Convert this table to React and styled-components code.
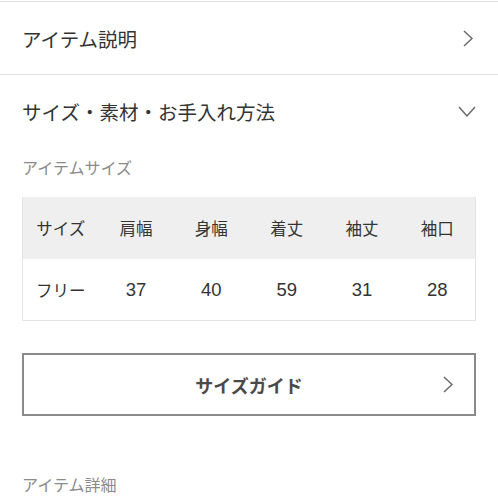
import styled, { createGlobalStyle } from "styled-components";

const GlobalStyle = createGlobalStyle`
  html, body {
    margin: 0;
    padding: 0;
    background: #fff;
  }
  body {
    font-family: "Noto Sans CJK JP", "Noto Sans", sans-serif;
    color: #333;
  }
`;

const Page = styled.div`
  width: 498px;
  padding-top: 1px;
`;

const AccordionRow = styled.div`
  height: 73px;
  border-top: 1px solid #e2e2e2;
  display: flex;
  align-items: center;
  justify-content: space-between;
  padding: 0 22px;
  box-sizing: border-box;
  font-size: 19.5px;
  color: #333;
`;

const IconBox = styled.span`
  display: flex;
  align-items: center;
  justify-content: center;
  width: ${(p) => p.$w}px;
  margin-right: ${(p) => p.$mr || 0}px;
`;

const Section = styled.div`
  padding: 0 22px;
`;

const Label = styled.div`
  font-size: 16px;
  line-height: 24px;
  color: #8a8a8a;
  margin-top: ${(p) => p.$mt}px;
`;

const Table = styled.div`
  margin-top: 18px;
  border: 1px solid #e4e4e4;
  border-top: none;
`;

const Row = styled.div`
  display: grid;
  grid-template-columns: repeat(6, 1fr);
  align-items: center;
  height: ${(p) => p.$h}px;
  background: ${(p) => (p.$head ? "#efefef" : "#fff")};
`;

const Cell = styled.div`
  text-align: center;
  font-family: "Liberation Sans", "Noto Sans CJK JP", sans-serif;
  font-size: ${(p) => (p.$num ? 18.5 : 16.5)}px;
  color: #333;
`;

const GuideButton = styled.div`
  margin-top: 32px;
  height: 63px;
  border: 2px solid #8a8a8a;
  box-sizing: border-box;
  display: grid;
  grid-template-columns: 1fr auto 1fr;
  align-items: center;
`;

const GuideText = styled.span`
  font-size: 18px;
  font-weight: 700;
  color: #4a4a4a;
`;

const ChevronSlot = styled(IconBox)`
  justify-self: end;
  margin-right: 21px;
`;

const ChevronRight = () => (
  <svg width="10" height="17" viewBox="0 0 10 17" fill="none">
    <polyline points="1,1 9,8.5 1,16" stroke="#666" strokeWidth="1.4" />
  </svg>
);

const ChevronDown = () => (
  <svg width="18" height="11" viewBox="0 0 18 11" fill="none">
    <polyline points="1,1 9,10 17,1" stroke="#666" strokeWidth="1.4" />
  </svg>
);

const heads = ["サイズ", "肩幅", "身幅", "着丈", "袖丈", "袖口"];
const values = ["フリー", "37", "40", "59", "31", "28"];

export default function App() {
  return (
    <Page>
      <GlobalStyle />
      <AccordionRow>
        <span>アイテム説明</span>
        <IconBox $w={10} $mr={3}>
          <ChevronRight />
        </IconBox>
      </AccordionRow>
      <AccordionRow>
        <span>サイズ・素材・お手入れ方法</span>
        <IconBox $w={18}>
          <ChevronDown />
        </IconBox>
      </AccordionRow>
      <Section>
        <Label $mt={8}>アイテムサイズ</Label>
        <Table>
          <Row $head $h={62}>
            {heads.map((h) => (
              <Cell key={h}>{h}</Cell>
            ))}
          </Row>
          <Row $h={61}>
            {values.map((v, i) => (
              <Cell key={v} $num={i > 0}>
                {v}
              </Cell>
            ))}
          </Row>
        </Table>
        <GuideButton>
          <span />
          <GuideText>サイズガイド</GuideText>
          <ChevronSlot $w={10}>
            <ChevronRight />
          </ChevronSlot>
        </GuideButton>
        <Label $mt={56}>アイテム詳細</Label>
      </Section>
    </Page>
  );
}
